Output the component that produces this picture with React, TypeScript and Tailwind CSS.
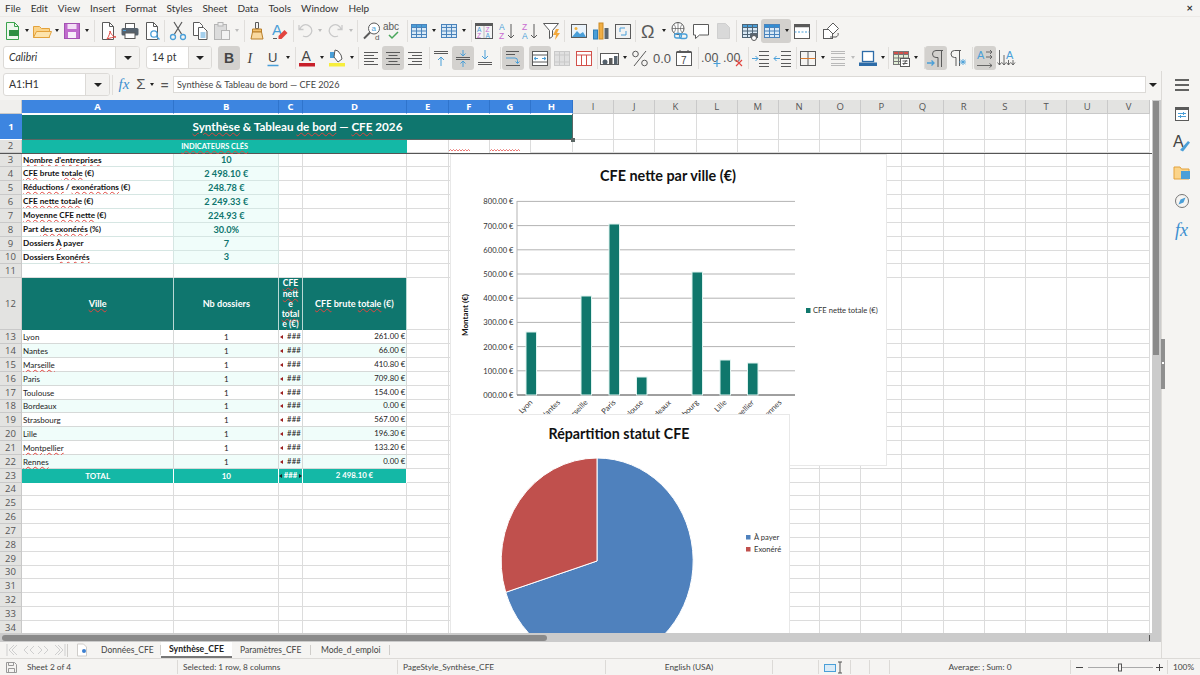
import type { ReactNode } from "react";

const GRID = "grid grid-cols-[22px_152.3px_105px_23.4px_104.6px_41.7px_41px_41px_42px_repeat(14,41.2px)]";
const columns = ["A", "B", "C", "D", "E", "F", "G", "H", "I", "J", "K", "L", "M", "N", "O", "P", "Q", "R", "S", "T", "U", "V"];
const GRAY = "#5a5a5a";
const BLUE = "#4a9fd8";

const kpis: [ReactNode, string][] = [
  [<Sq>Nombre d'entreprises</Sq>, "10"],
  [<><Sq>CFE</Sq> brute <Sq>totale</Sq> (€)</>, "2 498.10 €"],
  [<><Sq>Réductions</Sq> / <Sq>exonérations</Sq> (€)</>, "248.78 €"],
  [<><Sq>CFE nette totale</Sq> (€)</>, "2 249.33 €"],
  [<><Sq>Moyenne CFE nette</Sq> (€)</>, "224.93 €"],
  [<>Part <Sq>des exonérés</Sq> (%)</>, "30.0%"],
  [<>Dossiers <Sq>À</Sq> payer</>, "7"],
  [<>Dossiers <Sq>Exonérés</Sq></>, "3"],
];
const kpiHeights = ["h-[13px]", "h-[14px]", "h-[14px]", "h-[14px]", "h-[14px]", "h-[14px]", "h-[14px]", "h-[13px]"];

const cities: [ReactNode, string][] = [
  ["Lyon", "261.00 €"],
  ["Nantes", "66.00 €"],
  [<Sq>Marseille</Sq>, "410.80 €"],
  ["Paris", "709.80 €"],
  ["Toulouse", "154.00 €"],
  ["Bordeaux", "0.00 €"],
  ["Strasbourg", "567.00 €"],
  ["Lille", "196.30 €"],
  [<Sq>Montpellier</Sq>, "133.20 €"],
  [<Sq>Rennes</Sq>, "0.00 €"],
];

const bars = [
  { label: "Lyon", x: 526, top: 332 },
  { label: "Nantes", x: 553.5 },
  { label: "Marseille", x: 581, top: 296 },
  { label: "Paris", x: 609, top: 224 },
  { label: "Toulouse", x: 636.5, top: 377 },
  { label: "Bordeaux", x: 664.5 },
  { label: "Strasbourg", x: 692, top: 272 },
  { label: "Lille", x: 720, top: 360 },
  { label: "Montpellier", x: 747.5, top: 363 },
  { label: "Rennes", x: 775 },
];

// rows 13 and down average 13.8px, integer heights keep the grid lines crisp
const rowH = (i: number) => (i % 6 === 5 ? "h-[13px]" : "h-[14px]");

function Sq({ children }: { children: ReactNode }) {
  return <span className="underline decoration-wavy decoration-[#e2453f] decoration-[0.6px] underline-offset-[1px]">{children}</span>;
}

function S({ children }: { children: ReactNode }) {
  return (
    <svg width="22" height="22" viewBox="0 0 22 22" fill="none" strokeWidth="1">
      {children}
    </svg>
  );
}

function Btn({ children, on }: { children: ReactNode; on?: boolean }) {
  return <div className={on ? "w-[22px] h-[24px] flex items-center justify-center shrink-0 rounded-[3px] bg-[#d3d1ce]" : "w-[22px] h-[24px] flex items-center justify-center shrink-0"}>{children}</div>;
}

function Ar({ faded }: { faded?: boolean }) {
  return (
    <div className="w-[8px] h-[24px] flex items-center justify-center shrink-0">
      <div className={faded ? "border-x-[2.5px] border-x-transparent border-t-[3px] border-t-[#bdbdbd]" : "border-x-[2.5px] border-x-transparent border-t-[3px] border-t-[#222]"} />
    </div>
  );
}

function Sep({ c }: { c: string }) {
  return <div className={`w-px h-[22px] bg-[#e0dedb] shrink-0 ${c}`} />;
}

function Lines({ ys, x1, x2, c = GRAY }: { ys: number[]; x1: number[]; x2: number[]; c?: string }) {
  return (
    <>
      {ys.map((y, i) => (
        <path key={i} d={`M${x1[i % x1.length]} ${y}H${x2[i % x2.length]}`} stroke={c} />
      ))}
    </>
  );
}

function Grid3({ head = BLUE, line = "#4a83bb", fill = "#dbeaf6" }: { head?: string; line?: string; fill?: string }) {
  return (
    <>
      <rect x="3.5" y="4.5" width="15" height="13" fill={fill} stroke={line} />
      <rect x="3.5" y="4.5" width="15" height="3" fill={head} stroke={line} />
      <path d="M3.5 11h15M3.5 14.5h15M8.5 4.5v13M13.5 4.5v13" stroke={line} />
    </>
  );
}

function DropBox({ w, split, italic, label }: { w: string; split: string; italic?: boolean; label: string }) {
  return (
    <div className={`${w} h-[23px] flex rounded-[3px] border border-[#dcdad7] bg-white shrink-0 overflow-hidden`}>
      <div className={`flex-1 flex items-center pl-[5px] text-[10.5px] text-[#333] ${italic ? "italic" : ""}`}>{label}</div>
      <div className={`${split} flex items-center justify-center border-l border-[#dcdad7] bg-[#f3f2f0]`}>
        <div className="border-x-[4px] border-x-transparent border-t-[4px] border-t-[#222]" />
      </div>
    </div>
  );
}

function Toolbar1() {
  return (
    <div className="h-[27px] flex items-center pl-[1px]">
      <Btn><S><path d="M5.5 2.5h8l4 4v13h-12z" fill="#eef7ee" stroke="#3ba34d" /><path d="M13.5 2.5v4h4" stroke="#3ba34d" /><rect x="8" y="10" width="10" height="6" fill="#2c8f41" /></S></Btn>
      <Ar />
      <Btn><S><path d="M2.5 6.5h6l2 2h8v9h-16z" fill="#fbd48a" stroke="#e3a23c" /><path d="M2.5 17.5l3-6h15l-2.5 6z" fill="#fde4ad" stroke="#e3a23c" /></S></Btn>
      <Ar />
      <Btn><S><rect x="3.5" y="3.5" width="15" height="15" fill="#c06ccd" stroke="#a452b2" /><rect x="6.5" y="4" width="9" height="5" fill="#f3dff6" /><rect x="7" y="12" width="8" height="6" fill="#f8eefa" /></S></Btn>
      <Ar />
      <Sep c="ml-[3px] mr-[2px]" />
      <Btn><S><path d="M5.5 2.5h7l4 4v13h-11z" fill="#fff" stroke={GRAY} /><path d="M12.5 2.5v4h4" stroke={GRAY} /><path d="M10 19c2-3 3-6 3-8 1 3 2 5 6 6-3 0-6 1-9 2z" stroke="#e24a42" /></S></Btn>
      <Btn><S><rect x="6.5" y="3.5" width="9" height="5" fill="#fff" stroke={GRAY} /><rect x="2.5" y="8" width="17" height="7.5" rx="1.5" fill="#56626d" /><rect x="6" y="13" width="10" height="5.5" fill="#fff" stroke={GRAY} /><path d="M4 10.5h3" stroke={BLUE} /></S></Btn>
      <Btn><S><path d="M5.5 2.5h7l4 4v13h-11z" fill="#fff" stroke={GRAY} /><path d="M12.5 2.5v4h4" stroke={GRAY} /><circle cx="13" cy="14" r="3.2" fill="#fff" stroke={BLUE} strokeWidth="1.3" /><path d="M15.5 16.5l3 3" stroke={BLUE} strokeWidth="1.5" /></S></Btn>
      <Sep c="ml-px mr-[2px]" />
      <Btn><S><path d="M7 2l7.5 12M15 2L7.5 14" stroke={GRAY} strokeWidth="1.2" /><circle cx="6" cy="17" r="2.5" stroke={BLUE} strokeWidth="1.3" /><circle cx="16" cy="17" r="2.5" stroke={BLUE} strokeWidth="1.3" /></S></Btn>
      <Btn><S><path d="M4.5 2.5h6l3 3v10h-9z" fill="#fff" stroke={GRAY} /><path d="M9.5 7.5h5l3.5 3.5v8.5H9.5z" fill="#fff" stroke={GRAY} /><path d="M11.5 13h5M11.5 15h5M11.5 17h5" stroke={BLUE} /></S></Btn>
      <Btn><S><rect x="3.5" y="4.5" width="12" height="15" fill="#dcdcdc" stroke="#b5b5b5" /><rect x="7" y="2.5" width="5" height="3.5" fill="#eee" stroke="#b5b5b5" /><rect x="10.5" y="10.5" width="8" height="9" fill="#f2f2f2" stroke="#b5b5b5" /></S></Btn>
      <Ar faded />
      <Sep c="ml-[3px] mr-px" />
      <Btn><S><path d="M9.5 2.5h3v6h-3z" stroke={GRAY} /><path d="M6.5 9h9v3h-9z" fill="#f3c06d" stroke="#b97f2a" /><path d="M6.5 12L5 19h12l-1.5-7z" fill="#f9d9a0" stroke="#b97f2a" /></S></Btn>
      <Btn><S><text x="4" y="15" fontSize="15" fill={BLUE} fontFamily="Liberation Sans">A</text><path d="M5 18.5h4" stroke={GRAY} /><path d="M10.5 16l6-6 3 3-6 6h-3z" fill="#e2453f" /></S></Btn>
      <Sep c="ml-[3px]" />
      <Btn><S><path d="M8 15a6 6 0 1 0-3-7M4 4v4.5h4.5" stroke="#c9c9c9" strokeWidth="1.3" transform="translate(1 1)" /></S></Btn>
      <Ar faded />
      <div className="w-px shrink-0" />
      <Btn><S><path d="M13 15a6 6 0 1 1 3-7M17 4v4.5h-4.5" stroke="#c9c9c9" strokeWidth="1.3" transform="translate(0 1)" /></S></Btn>
      <Ar faded />
      <Sep c="ml-[2px] mr-[3px]" />
      <Btn><S><circle cx="13" cy="8.5" r="5.5" fill="#fff" stroke={GRAY} /><path d="M9 12.5l-6 6" stroke={GRAY} strokeWidth="2" /><text x="10.5" y="11" fontSize="8" fill={BLUE} fontFamily="Liberation Sans">a</text><text x="14" y="20" fontSize="8" fill={GRAY} fontFamily="Liberation Sans">d</text></S></Btn>
      <div className="-ml-px"><Btn><S><text x="1" y="10" fontSize="10" fill={GRAY} fontFamily="Liberation Sans">abc</text><path d="M7 15l3 3 6-6" stroke="#49a65a" strokeWidth="1.5" /></S></Btn></div>
      <Sep c="ml-[3px]" />
      <Btn><S><Grid3 /></S></Btn>
      <Ar />
      <Btn><S><Grid3 head="#cfe4f5" /></S></Btn>
      <Ar />
      <Sep c="ml-[3px] mr-[1px]" />
      <Btn><S><rect x="2.5" y="3.5" width="17" height="15" fill="#f4f4f4" stroke={GRAY} /><path d="M2.5 5h17" stroke={GRAY} strokeWidth="2" /><path d="M11 6v12" stroke="#bbb" /><text x="4" y="12" fontSize="6.5" fill={BLUE} fontFamily="Liberation Sans">A</text><text x="12.5" y="12" fontSize="6.5" fill="#c86bd0" fontFamily="Liberation Sans">Z</text><text x="4" y="18" fontSize="6.5" fill="#c86bd0" fontFamily="Liberation Sans">Z</text><text x="12.5" y="18" fontSize="6.5" fill={BLUE} fontFamily="Liberation Sans">A</text></S></Btn>
      <div className="w-px shrink-0" />
      <Btn><S><text x="3" y="10" fontSize="8.5" fill={BLUE} fontFamily="Liberation Sans">A</text><text x="3" y="19" fontSize="8.5" fill="#c86bd0" fontFamily="Liberation Sans">Z</text><path d="M15 4v14M12 15l3 3 3-3" stroke={GRAY} /></S></Btn>
      <div className="w-px shrink-0" />
      <Btn><S><text x="3" y="10" fontSize="8.5" fill="#c86bd0" fontFamily="Liberation Sans">Z</text><text x="3" y="19" fontSize="8.5" fill={BLUE} fontFamily="Liberation Sans">A</text><path d="M15 4v14M12 15l3 3 3-3" stroke={GRAY} /></S></Btn>
      <Btn><S><path d="M2.5 3.5h15l-6 7v6l-3 2v-8z" fill="#fff" stroke={GRAY} /><path d="M15 9l-3 6h3l-1 5 5-7h-3l2-4z" fill="#f3a93c" /></S></Btn>
      <Sep c="ml-px mr-[3px]" />
      <Btn><S><rect x="3.5" y="4.5" width="15" height="13" fill="#eaf3fb" stroke={GRAY} /><path d="M4 17l5-6 3 3 3-2 3 5z" fill={BLUE} /><circle cx="8" cy="8.5" r="1.5" fill="#f3b23c" /></S></Btn>
      <Btn><S><rect x="3.5" y="10" width="4" height="9" fill={BLUE} stroke="#2f7fb8" /><rect x="9" y="3" width="4" height="16" fill="#f0ae45" stroke="#cc8a24" /><rect x="14.5" y="8" width="4" height="11" fill="#5b6670" /></S></Btn>
      <Btn><S><rect x="3.5" y="4.5" width="15" height="14" fill="#f2f2f2" stroke={GRAY} /><path d="M13 8H8v4M9 15h5v-4" stroke={BLUE} /></S></Btn>
      <Sep c="ml-px mr-[2px]" />
      <Btn><S><text x="3" y="18" fontSize="18" fill={GRAY} fontFamily="Liberation Sans">Ω</text></S></Btn>
      <Ar />
      <Btn><S><circle cx="10" cy="8.5" r="6" fill="#fff" stroke={GRAY} /><path d="M4 8.5h12M10 2.5v12M6 4.5c2 2.5 2 5.5 0 8M14 4.5c-2 2.5-2 5.5 0 8" stroke={GRAY} strokeWidth="0.7" /><rect x="6.5" y="13.5" width="7" height="4.5" rx="2.2" stroke={BLUE} strokeWidth="1.3" /><rect x="11.5" y="14" width="7.5" height="4.5" rx="2.2" stroke={BLUE} strokeWidth="1.3" /></S></Btn>
      <Btn><S><path d="M3.5 4.5h15V15h-9l-4 3.5V15h-2z" fill="#fff" stroke={GRAY} /></S></Btn>
      <Btn><S><path d="M5.5 3.5h8l4 4v11h-12z" fill="#d9d9d9" stroke="#cfcfcf" /></S></Btn>
      <Sep c="ml-[2px] mr-[2px]" />
      <Btn><S><Grid3 line="#4f6475" /><rect x="11" y="13" width="8" height="5" rx="1" fill="#5b6670" /><circle cx="15" cy="18" r="2.5" fill="#fff" stroke={GRAY} /></S></Btn>
      <div className="w-[30px] h-[24px] flex items-center bg-[#d3d1ce] rounded-[3px] shrink-0">
        <Btn><S><Grid3 head="#2f8fd6" /></S></Btn>
        <Ar />
      </div>
      <Btn><S><rect x="3.5" y="4.5" width="15" height="14" fill="#fff" stroke={GRAY} /><path d="M3.5 6h15" stroke={GRAY} strokeWidth="2.5" /><path d="M3.5 12h15" stroke={BLUE} strokeDasharray="2 1.5" /></S></Btn>
      <Sep c="ml-[3px] mr-[3px]" />
      <Btn><S><rect x="3.5" y="9.5" width="9" height="9" fill="#fff" stroke={GRAY} /><path d="M13 3l5.5 5.5L13 14 7.5 8.5z" fill="#fff" stroke={GRAY} /><path d="M10 17h6a3 3 0 0 0 2-4" stroke={GRAY} /></S></Btn>
    </div>
  );
}

function Toolbar2() {
  return (
    <div className="h-[27px] flex items-center pl-[3px]">
      <DropBox w="w-[137px]" split="w-[24px]" italic label="Calibri" />
      <div className="w-[6px] shrink-0" />
      <DropBox w="w-[66px]" split="w-[23px]" label="14 pt" />
      <div className="w-[6px] shrink-0" />
      <Btn on><S><text x="6" y="16" fontSize="14" fontWeight="700" fill="#444" fontFamily="Liberation Sans">B</text></S></Btn>
      <Btn><S><text x="7.5" y="16" fontSize="14" fontStyle="italic" fill="#444" fontFamily="Liberation Serif">I</text></S></Btn>
      <Btn><S><text x="6" y="15" fontSize="13" fill="#444" fontFamily="Liberation Sans">U</text><path d="M5.5 18.5h11" stroke={BLUE} strokeWidth="1.5" /></S></Btn>
      <Ar />
      <Sep c="ml-[3px]" />
      <Btn><S><text x="5.5" y="14" fontSize="14" fill="#444" fontFamily="Liberation Sans">A</text><rect x="3" y="16" width="16" height="3.5" fill="#c8202a" /></S></Btn>
      <Ar />
      <Btn><S><path d="M4 5h6v6H4z" fill={BLUE} /><path d="M9 3l3 1 3 4 1 4-4 3-4-5z" fill="#fff" stroke={GRAY} /><rect x="3" y="16" width="16" height="3.5" fill="#f7ee3c" /></S></Btn>
      <Ar />
      <Sep c="ml-[2px] mr-px" />
      <Btn><S><Lines ys={[5.5, 8.5, 11.5, 14.5, 17.5]} x1={[4]} x2={[18, 14]} /></S></Btn>
      <Btn on><S><Lines ys={[5.5, 8.5, 11.5, 14.5, 17.5]} x1={[4, 6.5]} x2={[18, 15.5]} /></S></Btn>
      <Btn><S><Lines ys={[5.5, 8.5, 11.5, 14.5, 17.5]} x1={[4, 8]} x2={[18]} /></S></Btn>
      <Sep c="ml-[3px]" />
      <Btn><S><Lines ys={[4.5, 6.5]} x1={[4]} x2={[18, 18]} /><path d="M11 19V10M8 13l3-3 3 3" stroke={BLUE} /></S></Btn>
      <Btn on><S><Lines ys={[10.5, 12.5]} x1={[4]} x2={[18]} /><path d="M11 3v6M8.5 6.5L11 9l2.5-2.5M11 20v-6M8.5 16.5L11 14l2.5 2.5" stroke={BLUE} /></S></Btn>
      <Btn><S><Lines ys={[15.5, 17.5]} x1={[4]} x2={[18]} /><path d="M11 3v9M8 9l3 3 3-3" stroke={BLUE} /></S></Btn>
      <Sep c="ml-[4px] mr-[1px]" />
      <Btn on><S><Lines ys={[4.5, 7.5, 18.5]} x1={[4]} x2={[17, 13, 18]} /><path d="M4 11h9a2.5 2.5 0 0 1 2.5 2.5V16M13.5 14.5l2 2 2-2" stroke={BLUE} /></S></Btn>
      <div className="w-[5px] shrink-0" />
      <Btn on><S><rect x="3.5" y="4.5" width="15" height="14" fill="#fff" stroke={GRAY} /><path d="M3.5 8h15M3.5 15h15" stroke={GRAY} /><path d="M5 11.5h4M17 11.5h-4M7 10l-2 1.5L7 13M15 10l2 1.5-2 1.5" stroke={BLUE} /></S></Btn>
      <Btn><S><rect x="3.5" y="4.5" width="15" height="14" fill="#e0e0e0" stroke="#c9c9c9" /><path d="M3.5 8h15M3.5 15h15M8.5 4.5v14M13.5 4.5v14" stroke="#c9c9c9" /></S></Btn>
      <Btn><S><rect x="3.5" y="4.5" width="15" height="14" fill="#fff" stroke="#d2504a" /><path d="M3.5 8h15M8.5 8v10M13.5 8v10" stroke="#d2504a" /></S></Btn>
      <Sep c="ml-[2px] mr-px" />
      <Btn><S><rect x="1.5" y="6.5" width="18" height="11" fill="#fff" stroke={GRAY} /><circle cx="6" cy="15" r="2.5" fill="#56626d" /><rect x="10" y="11" width="3.5" height="6.5" fill={GRAY} /><rect x="15" y="9" width="3.5" height="8.5" fill="#56626d" /></S></Btn>
      <Ar />
      <Btn><S><circle cx="6.5" cy="7" r="2.8" stroke={GRAY} /><circle cx="15.5" cy="16" r="2.8" stroke={GRAY} /><path d="M17 4L5 19" stroke={GRAY} /></S></Btn>
      <Btn><S><text x="2" y="16" fontSize="13" fill="#555" fontFamily="Liberation Sans">0.0</text></S></Btn>
      <Btn><S><rect x="3.5" y="5.5" width="15" height="13" fill="#fff" stroke={GRAY} /><path d="M3.5 5h15" stroke={GRAY} strokeWidth="2" /><path d="M7 3v3M15 3v3" stroke={GRAY} /><text x="8" y="17" fontSize="10" fill="#444" fontFamily="Liberation Sans">7</text></S></Btn>
      <Sep c="ml-[3px] mr-[2px]" />
      <Btn><S><text x="0" y="15" fontSize="12.5" fill="#555" fontFamily="Liberation Sans">.00</text><path d="M16 13v7M12.5 16.5h7" stroke={BLUE} strokeWidth="1.2" /></S></Btn>
      <Btn><S><text x="0" y="15" fontSize="12.5" fill="#555" fontFamily="Liberation Sans">.00</text><path d="M13 13l6 6M19 13l-6 6" stroke="#e2453f" strokeWidth="1.2" /></S></Btn>
      <Sep c="ml-[3px] mr-px" />
      <Btn><S><Lines ys={[4.5, 8.5, 12.5, 16.5, 19.5]} x1={[9]} x2={[19]} /><path d="M2 11.5h6M5.5 9L8 11.5 5.5 14" stroke={BLUE} /></S></Btn>
      <Btn><S><Lines ys={[4.5, 8.5, 12.5, 16.5, 19.5]} x1={[9]} x2={[19]} /><path d="M8 11.5H2M4.5 9L2 11.5 4.5 14" stroke={BLUE} /></S></Btn>
      <Sep c="ml-[2px]" />
      <Btn><S><rect x="3.5" y="4.5" width="15" height="14" stroke={GRAY} /><path d="M11 4.5v14" stroke={GRAY} /><path d="M3.5 11.5h15" stroke="#d97b30" /></S></Btn>
      <Ar />
      <Btn><S><Lines ys={[4.5, 6.5, 10.5, 12.5, 16.5, 18.5]} x1={[4]} x2={[18]} c="#b9b9b9" /></S></Btn>
      <Ar faded />
      <Btn><S><rect x="5.5" y="4.5" width="11" height="10" fill="#fff" stroke="#2d6ca8" strokeWidth="1.3" /><rect x="2" y="15.5" width="18" height="3.5" fill="#2d6ca8" /></S></Btn>
      <Ar />
      <Sep c="ml-px mr-px" />
      <Btn><S><Grid3 head="#d2504a" line="#777" fill="#e3f0d8" /><rect x="10.5" y="11.5" width="9" height="8" fill="#fff" stroke={GRAY} /><path d="M12.5 14h5M12.5 16.5h5M16.5 13l-3 5" stroke={GRAY} /></S></Btn>
      <Ar />
      <Sep c="ml-[4px]" />
      <Btn on><S><path d="M18 3.5h-7a3.5 3.5 0 0 0 0 7h2V20M16.5 3.5V20" stroke={GRAY} /><path d="M2 16h7M6.5 13.5L9 16l-2.5 2.5" stroke={BLUE} strokeWidth="1.3" /></S></Btn>
      <Btn><S><path d="M14 3.5H7.5a3.5 3.5 0 0 0 0 7H9V19M12.5 3.5V19" stroke={GRAY} /><path d="M12 15h7M16 12v6M13.5 13l5 4M18.5 13l-5 4" stroke={BLUE} strokeWidth="0.9" /></S></Btn>
      <Sep c="ml-[3px] mr-px" />
      <Btn on><S><text x="3" y="12" fontSize="11" fill={BLUE} fontFamily="Liberation Sans">A</text><path d="M3 18.5h15M15.5 16.5l2.5 2-2.5 2M12 5h6M16 3l2 2-2 2M12 10h6M16 8l2 2-2 2" stroke={GRAY} strokeWidth="0.9" /></S></Btn>
      <Btn><S><text x="10" y="12" fontSize="11" fill={BLUE} fontFamily="Liberation Sans">A</text><path d="M3.5 3v15M1.5 15.5l2 2.5 2-2.5M8 8v10M6 15.5l2 2.5 2-2.5M12.5 13v5M10.5 15.5l2 2.5 2-2.5M17 13v5M15 15.5l2 2.5 2-2.5" stroke={GRAY} strokeWidth="0.9" /></S></Btn>
    </div>
  );
}

function FormulaBar() {
  return (
    <div className="h-[27px] flex items-center pl-[3px] shrink-0">
      <DropBox w="w-[107px]" split="w-[24px]" label="A1:H1" />
      <div className="w-px h-[20px] bg-[#e0dedb] ml-[2px] shrink-0" />
      <div className="w-[20px] ml-[1px] text-center text-[15px] italic text-[#3b8fd0] font-['Liberation_Serif',serif] shrink-0">fx</div>
      <div className="w-[14px] text-center text-[15px] text-[#555] shrink-0 font-['Liberation_Sans',sans-serif]">Σ</div>
      <Ar />
      <div className="w-[17px] text-center text-[15px] leading-none font-bold text-[#555] shrink-0">=</div>
      <div className="w-[973px] h-[17px] flex items-center pl-[3px] bg-white border border-[#dcdad7] text-[9.1px] text-[#444] shrink-0">Synthèse &amp; Tableau de bord — CFE 2026</div>
      <div className="w-[14px] flex justify-center shrink-0">
        <div className="border-x-[4px] border-x-transparent border-t-[4px] border-t-[#222]" />
      </div>
    </div>
  );
}

function RowHead({ n, on }: { n: number; on?: boolean }) {
  return <div className={on ? "flex items-center justify-center bg-[#3d85e0] text-white font-bold text-[9.5px] border-b border-white font-['Open_Sans',sans-serif]" : "flex items-center justify-center bg-[#e3e3e1] text-[#555] text-[9.5px] border-r border-b border-[#c9c9c9] font-['Open_Sans',sans-serif]"}>{n}</div>;
}

function Blank({ count }: { count: number }) {
  return (
    <>
      {Array.from({ length: count }).map((_, i) => (
        <div key={i} className="border-r border-b border-[#dcdcdc] bg-white" />
      ))}
    </>
  );
}

function Wave({ w }: { w: number }) {
  return (
    <svg width={w} height="3" viewBox={`0 0 ${w} 3`} fill="none" className="absolute bottom-[1px] left-0">
      <path d={`M0 2${" l1.5 -1.5 l1.5 1.5".repeat(Math.ceil(w / 3))}`} stroke="#e2453f" strokeWidth="0.7" />
    </svg>
  );
}

function Sheet() {
  return (
    <div className="relative w-[1152px] h-[533px] overflow-hidden bg-white leading-none font-['Lato',sans-serif] shrink-0">
      <div className={`${GRID} h-[14px]`}>
        <div className="bg-[#f0efed] border-r border-b border-[#c9c9c9]" />
        {columns.map((c, i) => (
          <div key={c} className={i < 8 ? "flex items-center justify-center bg-[#3d85e0] border-r border-[#2f74cc] border-b border-b-white text-white text-[9.5px] font-bold font-['Open_Sans',sans-serif]" : "flex items-center justify-center bg-[#e3e3e1] border-r border-b border-[#c9c9c9] text-[#555] text-[9.5px] font-['Open_Sans',sans-serif]"}>{c}</div>
        ))}
      </div>

      <div className={`${GRID} h-[26px]`}>
        <RowHead n={1} on />
        <div className="col-span-8 flex items-center justify-center bg-[#0f766e] text-white font-bold text-[11.7px] border-t border-b border-white">
          <span><Sq>Synthèse</Sq> &amp; Tableau <Sq>de bord</Sq> — <Sq>CFE</Sq> 2026</span>
        </div>
        <Blank count={14} />
      </div>

      <div className={`${GRID} h-[14px] border-b border-[#555]`}>
        <RowHead n={2} />
        <div className="col-span-4 flex items-center justify-center bg-[#14b8a6] text-white font-bold text-[7.4px]"><Sq>INDICATEURS CLÉS</Sq></div>
        <Blank count={1} />
        <div className="relative border-r border-[#dcdcdc] bg-white"><Wave w={21} /></div>
        <div className="relative border-r border-[#dcdcdc] bg-white"><Wave w={30} /></div>
        <Blank count={15} />
      </div>

      {kpis.map(([label, value], i) => (
        <div key={i} className={`${GRID} ${kpiHeights[i]}`}>
          <RowHead n={i + 3} />
          <div className="flex items-center pl-[1px] bg-white border-r border-b border-[#d6e6e3] text-[8.2px] font-bold text-[#111] whitespace-nowrap overflow-hidden">
            <span>{label}</span>
          </div>
          <div className="flex items-center justify-center bg-[#f0fdfa] border-r border-b border-[#d6e6e3] text-[9.2px] font-bold text-[#0f766e]">{value}</div>
          <Blank count={20} />
        </div>
      ))}

      <div className={`${GRID} h-[14px]`}>
        <RowHead n={11} />
        <Blank count={22} />
      </div>

      <div className={`${GRID} h-[52px]`}>
        <RowHead n={12} />
        <div className="flex items-center justify-center bg-[#0f766e] border-r border-[#b9d9d5] text-white font-bold text-[9.1px]"><Sq>Ville</Sq></div>
        <div className="flex items-center justify-center bg-[#0f766e] border-r border-[#b9d9d5] text-white font-bold text-[9.1px]">Nb dossiers</div>
        <div className="flex flex-col items-center justify-center bg-[#0f766e] border-r border-[#b9d9d5] text-white font-bold text-[8.6px] leading-[10.3px]">
          <span><Sq>CFE</Sq></span>
          <span><Sq>nett</Sq></span>
          <span><Sq>e</Sq></span>
          <span><Sq>total</Sq></span>
          <span><Sq>e</Sq> (€)</span>
        </div>
        <div className="flex items-center justify-center bg-[#0f766e] border-r border-[#b9d9d5] text-white font-bold text-[9.1px]"><span><Sq>CFE</Sq> brute <Sq>totale</Sq> (€)</span></div>
        <Blank count={18} />
      </div>

      {cities.map(([city, gross], i) => {
        const bg = i % 2 === 1 ? "bg-[#f0fdfa]" : "bg-white";
        return (
          <div key={i} className={`${GRID} ${rowH(i)}`}>
            <RowHead n={i + 13} />
            <div className={`${bg} flex items-center pl-[1px] border-r border-b border-[#d6d9d8] text-[8px] text-[#222]`}><span>{city}</span></div>
            <div className={`${bg} flex items-center justify-center border-r border-b border-[#d6d9d8] text-[8px] text-[#222]`}>1</div>
            <div className={`${bg} flex items-center justify-between pl-[1px] pr-[1px] border-r border-b border-[#d6d9d8] text-[7.8px] text-[#222]`}>
              <span className="border-y-[2px] border-y-transparent border-r-[3px] border-r-[#9c1c1c]" />
              <span>###</span>
            </div>
            <div className={`${bg} flex items-center justify-end pr-[1px] border-r border-b border-[#d6d9d8] text-[7.8px] text-[#222]`}>{gross}</div>
            <Blank count={18} />
          </div>
        );
      })}

      <div className={`${GRID} ${rowH(10)}`}>
        <RowHead n={23} />
        <div className="flex items-center justify-center bg-[#14b8a6] border-r border-white text-white font-bold text-[8px]">TOTAL</div>
        <div className="flex items-center justify-center bg-[#14b8a6] border-r border-white text-white font-bold text-[8px]">10</div>
        <div className="flex items-center justify-between bg-[#14b8a6] border-r border-white text-white font-bold text-[7.8px]">
          <span className="border-y-[2px] border-y-transparent border-r-[3px] border-r-[#222]" />
          <span>###</span>
          <span className="border-y-[2px] border-y-transparent border-l-[3px] border-l-[#222]" />
        </div>
        <div className="flex items-center justify-center bg-[#14b8a6] border-r border-white text-white font-bold text-[7.8px]">2 498.10 €</div>
        <Blank count={18} />
      </div>

      {Array.from({ length: 11 }).map((_, i) => (
        <div key={i} className={`${GRID} ${rowH(i + 11)}`}>
          <RowHead n={i + 24} />
          <Blank count={22} />
        </div>
      ))}

      {/* selection frame on the merged title */}
      <div className="absolute left-[22px] top-[14px] w-[551px] h-[26px] border-r border-b border-[#5b6664]" />
      <div className="absolute left-[570.5px] top-[37.5px] w-[4px] h-[4px] bg-[#5b6664]" />

      <div className="absolute left-[450px] top-[54px] w-[437px] h-[312px] bg-white border border-[#e8e8e8]">
        <BarChart />
      </div>
      <div className="absolute left-[450px] top-[314px] w-[340px] h-[219px] bg-white border-x border-t border-[#e8e8e8] overflow-hidden">
        <PieChart />
      </div>
    </div>
  );
}

function BarChart() {
  return (
    <svg width="435" height="310" viewBox="451 155 435 310" className="font-['Lato',sans-serif]">
      <text x="668" y="181" textAnchor="middle" fontSize="14.4" fontWeight="700" fill="#111">CFE nette par ville (€)</text>
      {[0, 1, 2, 3, 4, 5, 6, 7, 8].map((i) => {
        const y = 395 - i * 24.2;
        return (
          <g key={i}>
            <path d={`M517 ${y}H795`} stroke="#b3b3b3" strokeWidth="1" />
            <text x="513.5" y={y + 3} textAnchor="end" fontSize="7.6" fill="#333">{i}00.00 €</text>
          </g>
        );
      })}
      <path d="M517 201V395" stroke="#b3b3b3" />
      <path d="M517 395H795" stroke="#666" />
      {bars.map((b) => (
        <g key={b.label}>
          {b.top ? <rect x={b.x} y={b.top} width="10.5" height={395 - b.top} fill="#10776c" stroke="#dff3ef" strokeWidth="1" /> : null}
          <text x={b.x + 7} y="403" textAnchor="end" fontSize="7.6" fill="#333" transform={`rotate(-45 ${b.x + 7} 403)`}>{b.label}</text>
        </g>
      ))}
      <text x="468" y="315" textAnchor="middle" fontSize="8" fontWeight="700" fill="#111" transform="rotate(-90 468 315)">Montant (€)</text>
      <rect x="806" y="308" width="4.5" height="5" fill="#10776c" />
      <text x="813" y="313" fontSize="7.6" fill="#333">CFE nette totale (€)</text>
    </svg>
  );
}

function PieChart() {
  return (
    <svg width="338" height="218" viewBox="451 415 338 218" className="font-['Lato',sans-serif]">
      <text x="619" y="439" textAnchor="middle" fontSize="14.2" fontWeight="700" fill="#111">Répartition statut CFE</text>
      <path d="M597 561L597 458A96 103 0 1 1 505.7 592.3Z" fill="#4f81bd" stroke="#fff" strokeWidth="1" />
      <path d="M597 561L597 458A96 103 0 0 0 505.7 592.3Z" fill="#c0504d" stroke="#fff" strokeWidth="1" />
      <rect x="746" y="535" width="4.5" height="4.5" fill="#4f81bd" />
      <text x="754" y="540" fontSize="7.6" fill="#333">À payer</text>
      <rect x="746" y="547" width="4.5" height="4.5" fill="#c0504d" />
      <text x="754" y="552" fontSize="7.6" fill="#333">Exonéré</text>
    </svg>
  );
}

function Tabs() {
  return (
    <div className="h-[16px] flex items-center text-[8.5px] text-[#444] shrink-0">
      <svg width="60" height="14" viewBox="0 0 60 14" fill="none" stroke="#cfcfcf" className="ml-[6px] shrink-0">
        <path d="M1 1v12M8 2L3 7l5 5M11 2L6 7l5 5M22 3l-4 4 4 4M28 3l-4 4 4 4M32 3l4 4-4 4M38 3l4 4-4 4M49 2l5 5-5 5M52 2l5 5-5 5M59 1v12" />
      </svg>
      <div className="w-px h-[13px] bg-[#cfcdca] ml-[1px]" />
      <svg width="12" height="14" viewBox="0 0 12 14" fill="none" className="ml-[8px] shrink-0">
        <path d="M1.5 1h6l3 3v9h-9z" fill="#fff" stroke="#cfcdca" />
        <circle cx="8" cy="8" r="2" fill="#3b7fd0" />
      </svg>
      <div className="w-[72px] pl-[13px] whitespace-nowrap shrink-0">Données_CFE</div>
      <div className="w-px h-[10px] bg-[#cfcdca] shrink-0" />
      <div className="w-[71px] h-[16px] flex items-center justify-center bg-white border-b-[2px] border-[#777] font-bold text-[8.7px] text-[#222] whitespace-nowrap shrink-0">Synthèse_CFE</div>
      <div className="w-[78px] pl-[8px] whitespace-nowrap shrink-0">Paramètres_CFE</div>
      <div className="w-px h-[10px] bg-[#cfcdca] shrink-0" />
      <div className="w-[78px] pl-[10px] whitespace-nowrap shrink-0">Mode_d_emploi</div>
      <div className="w-px h-[10px] bg-[#cfcdca] shrink-0" />
    </div>
  );
}

function StatusCell({ w, children, center }: { w: string; children?: ReactNode; center?: boolean }) {
  return <div className={`${w} h-[14px] flex items-center ${center ? "justify-center" : "pl-[5px]"} border-r border-[#dcdad7] whitespace-nowrap shrink-0`}>{children}</div>;
}

function StatusBar() {
  return (
    <div className="h-[17px] flex items-center border-t border-[#dcdad7] text-[8.3px] text-[#444] bg-[#f5f4f2]">
      <StatusCell w="w-[178px]">
        <svg width="13" height="13" viewBox="0 0 13 13" fill="none" stroke="#999" className="mr-[9px]">
          <path d="M1.5 1.5h8l2 2v8h-10z" />
          <path d="M3.5 1.5v3h5v-3M3.5 11.5v-4h6v4" />
        </svg>
        Sheet 2 of 4
      </StatusCell>
      <StatusCell w="w-[220px]">Selected: 1 row, 8 columns</StatusCell>
      <StatusCell w="w-[208px]">PageStyle_Synthèse_CFE</StatusCell>
      <StatusCell w="w-[167px]" center>English (USA)</StatusCell>
      <StatusCell w="w-[46px]" />
      <StatusCell w="w-[32px]">
        <svg width="24" height="13" viewBox="0 0 24 13" fill="none" className="-ml-[1px] shrink-0">
          <rect x="1.5" y="3.5" width="11" height="7" fill="#d9ebf7" stroke={BLUE} />
          <path d="M15 1h4M15 12h4M17 1v11" stroke="#555" />
        </svg>
      </StatusCell>
      <StatusCell w="w-[19px]" />
      <StatusCell w="w-[20px]" />
      <StatusCell w="w-[181px]" center>Average: ; Sum: 0</StatusCell>
      <div className="w-[97px] h-[14px] flex items-center border-r border-[#dcdad7] shrink-0">
        <svg width="96" height="13" viewBox="0 0 96 13" fill="none" stroke="#444">
          <path d="M5 6.5h7" />
          <path d="M17 6.5h65" stroke="#aaa" />
          <rect x="47.5" y="3" width="3" height="7" fill="#f5f4f2" stroke="#555" />
          <path d="M85 6.5h7M88.5 3v7" />
        </svg>
      </div>
      <div className="pl-[5px]">100%</div>
    </div>
  );
}

function Sidebar() {
  return (
    <div className="relative w-[39px] h-[587px] border-l border-[#dcdad7] flex flex-col items-center pl-[1px] pt-[3px] gap-[7px] shrink-0">
      <div className="absolute -left-px top-[268px] w-[4px] h-[50px] bg-[#8f8f8f]">
        <div className="mt-[23px] ml-[1px] w-[2px] h-[2px] bg-white" />
      </div>
      <S><path d="M4 6h14M4 11h14M4 16h14" stroke="#333" strokeWidth="1.6" /></S>
      <S><rect x="4.5" y="4.5" width="13" height="13" fill="#fff" stroke={GRAY} /><path d="M4.5 6h13" stroke={GRAY} strokeWidth="2" /><path d="M7 10.5h8M7 13.5h8M12.5 9v3M9.5 12v3" stroke={BLUE} /></S>
      <S><text x="2" y="15" fontSize="16" fill="#444" fontFamily="Liberation Sans">A</text><path d="M9 18l8-9 2 1.5-7 9z" fill={BLUE} /></S>
      <S><path d="M3 6h6l1.5 2H18v10H3z" fill="#fbd48a" stroke="#e3a23c" /><rect x="10" y="10" width="9" height="8" fill={BLUE} /></S>
      <S><circle cx="11" cy="11" r="6.5" stroke="#777" /><path d="M14.5 7.5l-2 5-5 2 2-5z" fill={BLUE} /></S>
      <div className="h-[22px] text-[18px] leading-[22px] italic text-[#3b8fd0] font-['Liberation_Serif',serif]">fx</div>
    </div>
  );
}

export default function App() {
  return (
    <div className="w-[1200px] h-[675px] overflow-hidden flex flex-col bg-[#f5f4f2] font-['Lato',sans-serif]">
      <div className="h-[17px] flex items-center pl-[5px] gap-[10px] text-[10px] text-[#333] border-b border-[#eceae7]">
        {["File", "Edit", "View", "Insert", "Format", "Styles", "Sheet", "Data", "Tools", "Window", "Help"].map((m) => (
          <span key={m}>{m}</span>
        ))}
        <span className="ml-auto mr-[7px] text-[11px] font-bold text-[#333]">×</span>
      </div>
      <Toolbar1 />
      <Toolbar2 />
      <div className="flex h-[587px]">
        <div className="w-[1161px] flex flex-col shrink-0">
          <FormulaBar />
          <div className="h-[2px] shrink-0" />
          <div className="flex h-[533px] shrink-0">
            <Sheet />
            <div className="w-[9px] bg-[#cbcbcb] pt-px pl-px shrink-0">
              <div className="w-[6px] h-[254px] bg-[#8a8a8a]" />
            </div>
          </div>
          <div className="h-[9px] bg-[#cbcbcb] flex items-center pl-[2px] shrink-0">
            <div className="w-[545px] h-[6px] rounded-[3px] bg-[#8a8a8a]" />
            <div className="ml-[602px] w-px h-[6px] bg-[#555]" />
          </div>
          <Tabs />
        </div>
        <Sidebar />
      </div>
      <StatusBar />
    </div>
  );
}
